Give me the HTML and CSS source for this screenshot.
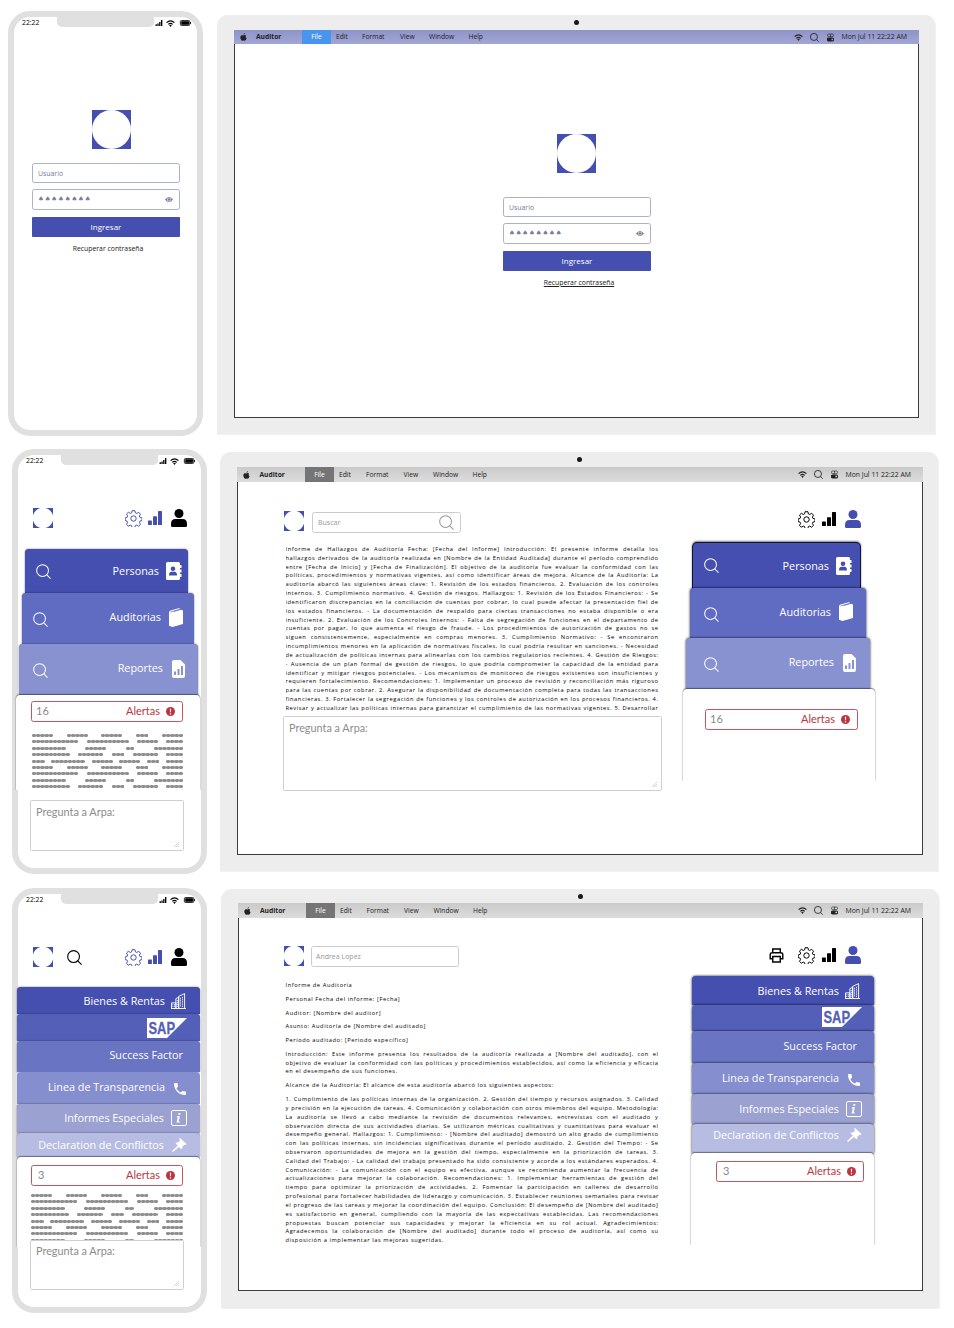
FILE: index.html
```html
<!DOCTYPE html>
<html lang="es">
<head>
<meta charset="utf-8">
<title>Auditor</title>
<link rel="stylesheet" href="styles.css">
</head>
<body>
<svg class="defs" width="0" height="0" aria-hidden="true">
  <symbol id="signal" viewBox="0 0 8 7"><path d="M0 5h1.500v2H0zM2.100 4h1.500v3H2.100zM4.200 2.200h1.500V7H4.200zM6.300 0h1.600v7H6.300z"/></symbol>
  <symbol id="wifi" viewBox="0 0 20 16"><path d="M1 6q9-8 18 0M5 10q5-4.500 10 0" fill="none" stroke="currentColor" stroke-width="2.800"/><path d="M7 12q3-2 6 0l-3 4z"/></symbol>
  <symbol id="battery" viewBox="0 0 13 7"><rect x=".5" y=".5" width="11" height="6" rx="1.500" fill="none" stroke="currentColor"/><rect x="1.500" y="1.400" width="9" height="4.200"/><path d="M12 2.300h1v2.400h-1z"/></symbol>
  <symbol id="logo" viewBox="0 0 40 40"><path fill="#444fb0" d="M0 0h40v40H0z"/><circle cx="20" cy="20" r="20" fill="#fff"/></symbol>
  <symbol id="logo-small" viewBox="0 0 40 40"><path fill="#444fb0" d="M0 0h40v40H0z"/><circle cx="20" cy="20" r="20.600" fill="#fff"/></symbol>
  <symbol id="eye" viewBox="0 0 16 10"><path fill-rule="evenodd" d="M0 5Q8-5 16 5Q8 15 0 5zM8 1.300a3.700 3.700 0 1 0 0 7.400a3.700 3.700 0 1 0 0-7.400z"/><circle cx="8" cy="5" r="2.500"/></symbol>
  <symbol id="search" viewBox="0 0 16 16"><g fill="none" stroke="currentColor"><circle cx="7" cy="7" r="6.300"/><path d="M11.500 11.500l4 4"/></g></symbol>
  <symbol id="apple" viewBox="0 0 14 17"><path d="M10 0q.2 3-3 4Q6.800 1 10 0zM7 5.200q3-2 5.800.5-2.800 2.500.7 5.200Q11.500 17 9.500 16.600q-2-.9-4 0Q2.800 17 .8 12-.8 6.500 3 4.800q2-.7 4 .4z"/></symbol>
  <symbol id="control" viewBox="0 0 16 18"><g fill="none" stroke="currentColor" stroke-width="1.500"><rect x="1" y="1" width="14" height="6" rx="3"/><path d="M8 1v6"/></g><path fill-rule="evenodd" d="M4 9h8a4 4 0 0 1 0 9H4a4 4 0 0 1 0-9zm8 2.500a2 2 0 1 0 0 4a2 2 0 1 0 0-4z"/></symbol>
  <symbol id="gear" viewBox="0 0 24 24"><g fill="none" stroke="currentColor" stroke-width="1.400" stroke-linejoin="round"><path d="M10 1h4l.7 3.100 1.800.8 2.800-1.700 2.600 2.700-1.600 2.700.8 1.900 3 .7v3.700l-3 .8-.8 1.800 1.600 2.800-2.700 2.600-2.700-1.600-1.900.8-.7 2.900h-3.800l-.8-2.900-1.800-.8-2.800 1.600-2.600-2.700 1.600-2.700-.8-1.800-2.700-.8v-3.700l2.700-.7.8-1.900-1.600-2.800 2.600-2.600 2.800 1.700 1.800-.8z"/><circle cx="12" cy="12" r="3.800"/></g></symbol>
  <symbol id="bars" viewBox="0 0 14 14"><rect y="9.500" width="3.900" height="4.500" rx=".6"/><rect x="5" y="5.300" width="4" height="8.700" rx=".6"/><rect x="10" width="4" height="14" rx=".6"/></symbol>
  <symbol id="person" viewBox="0 0 16 18"><circle cx="8" cy="4.500" r="4.500"/><path d="M4.500 10h7q4.500 0 4.500 5v1.500q0 1.500-1.500 1.500h-13Q0 18 0 16.500V15q0-5 4.500-5z"/></symbol>
  <symbol id="contact" viewBox="0 0 16 18"><path fill-rule="evenodd" d="M1.500 0h11Q14 0 14 1.500V3h1.500v3H14v1.500h1.500v3H14V12h1.500v3H14v1.500q0 1.500-1.500 1.500h-11Q0 18 0 16.500v-15Q0 0 1.500 0zM7 4.500a2.300 2.300 0 1 0 0 4.600a2.300 2.300 0 1 0 0-4.600zM3 13.500h8q0-3.700-2.500-3.700h-3Q3 9.800 3 13.500z"/></symbol>
  <symbol id="book" viewBox="0 0 14 19"><path d="M0 4.500Q0 3 1.500 2.500L10.500 0v1.300L4.300 3.300l1 .5L12 1.800l2 .7v13.500L3.500 19 0 17.800z"/><path d="M1.500 4L10 1.600" stroke="#5f6cc2" stroke-width=".7"/></symbol>
  <symbol id="report" viewBox="0 0 13 18"><path fill-rule="evenodd" d="M2 0h6.500L13 4.500V16q0 2-2 2H2q-2 0-2-2V2q0-2 2-2zM2 11.500V15h2v-3.500zM5.500 9v6h2V9zM9 6v9h2V6z"/></symbol>
  <symbol id="buildings" viewBox="0 0 16 17"><g fill="none" stroke="currentColor" stroke-width="1"><path d="M.5 16.500v-6h4.700v6M5.200 16.500V6l3-1.500v12M8.200 16.500V3.500L14.500.6v15.900M0 16.500h16"/><path d="M2 12v3M3.700 12v3M6.700 7.500v8M10.200 5v10M12.300 4v11" stroke-dasharray="1.200 .8"/></g></symbol>
  <symbol id="sap" viewBox="0 0 40 20"><path fill="#fff" d="M0 0h40L20 20H0z"/><text x="1.500" y="16" font-family="Liberation Sans" font-weight="700" font-size="17" textLength="26.500" lengthAdjust="spacingAndGlyphs" fill="currentColor" stroke="currentColor" stroke-width=".3">SAP</text></symbol>
  <symbol id="phone" viewBox="0 0 18 18"><path d="M3.600 7.800c1.400 2.800 3.800 5.100 6.600 6.600l2.200-2.200q.5-.5 1-.2c1.100.4 2.300.6 3.600.6q1 0 1 1V17q0 1-1 1C7.600 18 0 10.400 0 1q0-1 1-1h3.500q1 0 1 1c0 1.300.2 2.500.6 3.600q.1.500-.2 1z"/></symbol>
  <symbol id="info" viewBox="0 0 16 16"><rect x=".5" y=".5" width="15" height="15" rx="1.500" fill="none" stroke="currentColor"/><path d="M7.500 3h2l-.4 1.700H7.100zM6 6.300h3l-1.400 5.200H9l-.3 1H5.500l1.300-5H5.700z"/></symbol>
  <symbol id="gavel" viewBox="0 0 16 15"><path d="M8.500 0l7 6.300-1.300 1.300-.9-.3-2.400 2.200.2 1.400-1.200 1.100-2.500-2.400L1 15 0 14l6.200-6-2.400-2.200L5 4.500l1.500.2L8.600 2.700 8.200 1.500 7.300 1.100z"/></symbol>
  <symbol id="alert" viewBox="0 0 10 10"><circle cx="5" cy="5" r="5"/><path d="M4.300 1.900h1.400l-.2 3.900h-1z" fill="#fff"/><circle cx="5" cy="7.400" r=".8" fill="#fff"/></symbol>
  <symbol id="printer" viewBox="0 0 15 16"><g fill="none" stroke="currentColor" stroke-width="1.500"><path d="M3.500 5V1h8v4M3 11.500H.8V7q0-2 2-2h9.400q2 0 2 2v4.500H12"/><path d="M3.500 9h8v6h-8z"/></g></symbol>
  <symbol id="grip" viewBox="0 0 6 6"><path d="M0 6l6-6M2.500 6L6 2.500M4.500 6L6 4.500" fill="none" stroke="#aaa" stroke-width=".6"/></symbol>
</svg>

<main class="board">

<section class="row row-login">
  <div class="mobile">
    <div class="notch"></div>
    <div class="status"><span>22:22</span><svg class="i-signal"><use href="#signal"/></svg><svg class="i-wifi"><use href="#wifi"/></svg><svg class="i-battery"><use href="#battery"/></svg></div>
    <div class="login login-mobile">
      <svg class="login-logo"><use href="#logo"/></svg>
      <div class="input user">Usuario</div>
      <div class="input pass"><span class="mask">♠♠♠♠♠♠♠♠</span><svg class="i-eye"><use href="#eye"/></svg></div>
      <div class="button">Ingresar</div>
      <div class="link">Recuperar contraseña</div>
    </div>
  </div>
  <div class="laptop">
    <div class="camera"></div>
    <div class="screen">
      <div class="menubar blue"><svg class="i-apple"><use href="#apple"/></svg><b>Auditor</b><span class="active">File</span><span class="edit">Edit</span><span>Format</span><span>View</span><span>Window</span><span>Help</span><div class="tray"><svg class="i-mwifi"><use href="#wifi"/></svg><svg class="i-msearch"><use href="#search"/></svg><svg class="i-control"><use href="#control"/></svg><span>Mon Jul 11 22:22 AM</span></div></div>
      <div class="login login-desk">
        <svg class="login-logo"><use href="#logo"/></svg>
        <div class="input user">Usuario</div>
        <div class="input pass"><span class="mask">♠♠♠♠♠♠♠♠</span><svg class="i-eye"><use href="#eye"/></svg></div>
        <div class="button">Ingresar</div>
        <div class="link underlined">Recuperar contraseña</div>
      </div>
    </div>
  </div>
</section>

<section class="row row-home">
  <div class="mobile">
    <div class="notch"></div>
    <div class="status"><span>22:22</span><svg class="i-signal"><use href="#signal"/></svg><svg class="i-wifi"><use href="#wifi"/></svg><svg class="i-battery"><use href="#battery"/></svg></div>
    <div class="m-head"><svg class="i-logo"><use href="#logo-small"/></svg><svg class="i-gear brand push"><use href="#gear"/></svg><svg class="i-bars brand"><use href="#bars"/></svg><svg class="i-person"><use href="#person"/></svg></div>
    <div class="stack m-home">
      <div class="card c1"><svg class="i-search"><use href="#search"/></svg><span>Personas</span><svg class="i-contact"><use href="#contact"/></svg></div>
      <div class="card c2"><svg class="i-search"><use href="#search"/></svg><span>Auditorias</span><svg class="i-book"><use href="#book"/></svg></div>
      <div class="card c3"><svg class="i-search"><use href="#search"/></svg><span>Reportes</span><svg class="i-report"><use href="#report"/></svg></div>
      <div class="panel">
        <div class="alert"><span>16</span><strong>Alertas</strong><svg class="i-alert"><use href="#alert"/></svg></div>
        <div class="redacted">
          <p><i class="w5"></i><i class="w5"></i><i class="w5"></i><i class="w3"></i><i class="w5"></i></p>
          <p><i class="w11"></i><i class="w10"></i><i class="w5"></i><i class="w4"></i></p>
          <p><i class="w8"></i><i class="w5"></i><i class="w2"></i><i class="w7"></i></p>
          <p><i class="w9"></i><i class="w6"></i><i class="w3"></i><i class="w6"></i><i class="w4"></i></p>
          <p><i class="w3"></i><i class="w8"></i><i class="w5"></i><i class="w5"></i><i class="w3"></i><i class="w4"></i></p>
          <p><i class="w5"></i><i class="w5"></i><i class="w5"></i><i class="w3"></i><i class="w5"></i></p>
          <p><i class="w11"></i><i class="w10"></i><i class="w5"></i><i class="w4"></i></p>
          <p><i class="w8"></i><i class="w5"></i><i class="w2"></i><i class="w7"></i></p>
          <p><i class="w9"></i><i class="w6"></i><i class="w3"></i><i class="w6"></i><i class="w4"></i></p>
        </div>
      </div>
    </div>
    <div class="ask"><span>Pregunta a Arpa:</span><svg class="i-grip"><use href="#grip"/></svg></div>
  </div>
  <div class="laptop">
    <div class="camera"></div>
    <div class="screen">
      <div class="menubar"><svg class="i-apple"><use href="#apple"/></svg><b>Auditor</b><span class="active">File</span><span class="edit">Edit</span><span>Format</span><span>View</span><span>Window</span><span>Help</span><div class="tray"><svg class="i-mwifi"><use href="#wifi"/></svg><svg class="i-msearch"><use href="#search"/></svg><svg class="i-control"><use href="#control"/></svg><span>Mon Jul 11 22:22 AM</span></div></div>
      <div class="desk desk-home">
        <div class="left">
          <div class="d-head"><svg class="i-logo"><use href="#logo-small"/></svg><div class="find"><span>Buscar</span><svg class="i-search"><use href="#search"/></svg></div></div>
          <div class="doc doc-clip">
            <p class="full"><span>Informe de Hallazgos de Auditoría Fecha: [Fecha del Informe] Introducción: El presente informe detalla los</span>
            <span>hallazgos derivados de la auditoría realizada en [Nombre de la Entidad Auditada] durante el período comprendido</span>
            <span>entre [Fecha de Inicio] y [Fecha de Finalización]. El objetivo de la auditoría fue evaluar la conformidad con las</span>
            <span>políticas, procedimientos y normativas vigentes, así como identificar áreas de mejora. Alcance de la Auditoría: La</span>
            <span>auditoría abarcó las siguientes áreas clave: 1. Revisión de los estados financieros. 2. Evaluación de los controles</span>
            <span>internos. 3. Cumplimiento normativo. 4. Gestión de riesgos. Hallazgos: 1. Revisión de los Estados Financieros: - Se</span>
            <span>identificaron discrepancias en la conciliación de cuentas por cobrar, lo cual puede afectar la presentación fiel de</span>
            <span>los estados financieros. - La documentación de respaldo para ciertas transacciones no estaba disponible o era</span>
            <span>insuficiente. 2. Evaluación de los Controles Internos: - Falta de segregación de funciones en el departamento de</span>
            <span>cuentas por pagar, lo que aumenta el riesgo de fraude. - Los procedimientos de autorización de gastos no se</span>
            <span>siguen consistentemente, especialmente en compras menores. 3. Cumplimiento Normativo: - Se encontraron</span>
            <span>incumplimientos menores en la aplicación de normativas fiscales, lo cual podría resultar en sanciones. - Necesidad</span>
            <span>de actualización de políticas internas para alinearlas con los cambios regulatorios recientes. 4. Gestión de Riesgos:</span>
            <span>- Ausencia de un plan formal de gestión de riesgos, lo que podría comprometer la capacidad de la entidad para</span>
            <span>identificar y mitigar riesgos potenciales. - Los mecanismos de monitoreo de riesgos existentes son insuficientes y</span>
            <span>requieren fortalecimiento. Recomendaciones: 1. Implementar un proceso de revisión y reconciliación más riguroso</span>
            <span>para las cuentas por cobrar. 2. Asegurar la disponibilidad de documentación completa para todas las transacciones</span>
            <span>financieras. 3. Fortalecer la segregación de funciones y los controles de autorización en los procesos financieros. 4.</span>
            <span>Revisar y actualizar las políticas internas para garantizar el cumplimiento de las normativas vigentes. 5. Desarrollar</span></p>
          </div>
          <div class="ask"><span>Pregunta a Arpa:</span><svg class="i-grip"><use href="#grip"/></svg></div>
        </div>
        <div class="right">
          <div class="tools"><svg class="i-gear"><use href="#gear"/></svg><svg class="i-bars"><use href="#bars"/></svg><svg class="i-person brand"><use href="#person"/></svg></div>
          <div class="stack d-home">
            <div class="card c1"><svg class="i-search"><use href="#search"/></svg><span>Personas</span><svg class="i-contact"><use href="#contact"/></svg></div>
            <div class="card c2"><svg class="i-search"><use href="#search"/></svg><span>Auditorias</span><svg class="i-book"><use href="#book"/></svg></div>
            <div class="card c3"><svg class="i-search"><use href="#search"/></svg><span>Reportes</span><svg class="i-report"><use href="#report"/></svg></div>
            <div class="panel"><div class="alert"><span>16</span><strong>Alertas</strong><svg class="i-alert"><use href="#alert"/></svg></div></div>
          </div>
        </div>
      </div>
    </div>
  </div>
</section>

<section class="row row-detail">
  <div class="mobile">
    <div class="notch"></div>
    <div class="status"><span>22:22</span><svg class="i-signal"><use href="#signal"/></svg><svg class="i-wifi"><use href="#wifi"/></svg><svg class="i-battery"><use href="#battery"/></svg></div>
    <div class="m-head"><svg class="i-logo"><use href="#logo-small"/></svg><svg class="i-search"><use href="#search"/></svg><svg class="i-gear brand push"><use href="#gear"/></svg><svg class="i-bars brand"><use href="#bars"/></svg><svg class="i-person"><use href="#person"/></svg></div>
    <div class="stack m-detail">
      <div class="card k1"><span>Bienes &amp; Rentas</span><svg class="i-buildings"><use href="#buildings"/></svg></div>
      <div class="card k2"><svg class="i-sap"><use href="#sap"/></svg></div>
      <div class="card k3"><span>Success Factor</span></div>
      <div class="card k4"><span>Linea de Transparencia</span><svg class="i-phone"><use href="#phone"/></svg></div>
      <div class="card k5"><span>Informes Especiales</span><svg class="i-info"><use href="#info"/></svg></div>
      <div class="card k6"><span>Declaration de Conflictos</span><svg class="i-gavel"><use href="#gavel"/></svg></div>
      <div class="panel">
        <div class="alert"><span>3</span><strong>Alertas</strong><svg class="i-alert"><use href="#alert"/></svg></div>
        <div class="redacted">
          <p><i class="w5"></i><i class="w5"></i><i class="w5"></i><i class="w3"></i><i class="w5"></i></p>
          <p><i class="w11"></i><i class="w10"></i><i class="w5"></i><i class="w4"></i></p>
          <p><i class="w8"></i><i class="w5"></i><i class="w2"></i><i class="w7"></i></p>
          <p><i class="w9"></i><i class="w6"></i><i class="w3"></i><i class="w6"></i><i class="w4"></i></p>
          <p><i class="w3"></i><i class="w8"></i><i class="w5"></i><i class="w5"></i><i class="w3"></i><i class="w4"></i></p>
          <p><i class="w5"></i><i class="w5"></i><i class="w5"></i><i class="w3"></i><i class="w5"></i></p>
          <p><i class="w11"></i><i class="w10"></i><i class="w5"></i><i class="w4"></i></p>
          <p><i class="w8"></i><i class="w5"></i><i class="w2"></i><i class="w7"></i></p>
        </div>
      </div>
    </div>
    <div class="ask"><span>Pregunta a Arpa:</span><svg class="i-grip"><use href="#grip"/></svg></div>
  </div>
  <div class="laptop">
    <div class="camera"></div>
    <div class="screen">
      <div class="menubar"><svg class="i-apple"><use href="#apple"/></svg><b>Auditor</b><span class="active">File</span><span class="edit">Edit</span><span>Format</span><span>View</span><span>Window</span><span>Help</span><div class="tray"><svg class="i-mwifi"><use href="#wifi"/></svg><svg class="i-msearch"><use href="#search"/></svg><svg class="i-control"><use href="#control"/></svg><span>Mon Jul 11 22:22 AM</span></div></div>
      <div class="desk desk-detail">
        <div class="left">
          <div class="d-head"><svg class="i-logo"><use href="#logo-small"/></svg><div class="find"><span>Andrea Lopez</span></div></div>
          <div class="doc">
            <p>Informe de Auditoria</p>
            <p>Personal Fecha del informe: [Fecha]</p>
            <p>Auditor: [Nombre del auditor]</p>
            <p>Asunto: Auditoría de [Nombre del auditado]</p>
            <p>Periodo auditado: [Periodo específico]</p>
            <p class="full"><span>Introducción: Este informe presenta los resultados de la auditoría realizada a [Nombre del auditado], con el</span>
            <span>objetivo de evaluar la conformidad con las políticas y procedimientos establecidos, así como la eficiencia y eficacia</span>
            <span class="last">en el desempeño de sus funciones.</span></p>
            <p>Alcance de la Auditoría: El alcance de esta auditoría abarcó los siguientes aspectos:</p>
            <p class="full"><span>1. Cumplimiento de las políticas internas de la organización. 2. Gestión del tiempo y recursos asignados. 3. Calidad</span>
            <span>y precisión en la ejecución de tareas. 4. Comunicación y colaboración con otros miembros del equipo. Metodología:</span>
            <span>La auditoría se llevó a cabo mediante la revisión de documentos relevantes, entrevistas con el auditado y</span>
            <span>observación directa de sus actividades diarias. Se utilizaron métricas cualitativas y cuantitativas para evaluar el</span>
            <span>desempeño general. Hallazgos: 1. Cumplimiento: - [Nombre del auditado] demostró un alto grado de cumplimiento</span>
            <span>con las políticas internas, sin incidencias significativas durante el período auditado. 2. Gestión del Tiempo: - Se</span>
            <span>observaron oportunidades de mejora en la gestión del tiempo, especialmente en la priorización de tareas. 3.</span>
            <span>Calidad del Trabajo: - La calidad del trabajo presentado ha sido consistente y acorde a los estándares esperados. 4.</span>
            <span>Comunicación: - La comunicación con el equipo es efectiva, aunque se recomienda aumentar la frecuencia de</span>
            <span>actualizaciones para mejorar la colaboración. Recomendaciones: 1. Implementar herramientas de gestión del</span>
            <span>tiempo para optimizar la priorización de actividades. 2. Fomentar la participación en talleres de desarrollo</span>
            <span>profesional para fortalecer habilidades de liderazgo y comunicación. 3. Establecer reuniones semanales para revisar</span>
            <span>el progreso de las tareas y mejorar la coordinación del equipo. Conclusión: El desempeño de [Nombre del auditado]</span>
            <span>es satisfactorio en general, cumpliendo con la mayoría de las expectativas establecidas. Las recomendaciones</span>
            <span>propuestas buscan potenciar sus capacidades y mejorar la eficiencia en su rol actual. Agradecimientos:</span>
            <span>Agradecemos la colaboración de [Nombre del auditado] durante todo el proceso de auditoría, así como su</span>
            <span class="last">disposición a implementar las mejoras sugeridas.</span></p>
          </div>
        </div>
        <div class="right">
          <div class="tools"><svg class="i-printer"><use href="#printer"/></svg><svg class="i-gear"><use href="#gear"/></svg><svg class="i-bars"><use href="#bars"/></svg><svg class="i-person brand"><use href="#person"/></svg></div>
          <div class="stack d-detail">
            <div class="card k1"><span>Bienes &amp; Rentas</span><svg class="i-buildings"><use href="#buildings"/></svg></div>
            <div class="card k2"><svg class="i-sap"><use href="#sap"/></svg></div>
            <div class="card k3"><span>Success Factor</span></div>
            <div class="card k4"><span>Linea de Transparencia</span><svg class="i-phone"><use href="#phone"/></svg></div>
            <div class="card k5"><span>Informes Especiales</span><svg class="i-info"><use href="#info"/></svg></div>
            <div class="card k6"><span>Declaration de Conflictos</span><svg class="i-gavel"><use href="#gavel"/></svg></div>
            <div class="panel"><div class="alert"><span>3</span><strong>Alertas</strong><svg class="i-alert"><use href="#alert"/></svg></div></div>
          </div>
        </div>
      </div>
    </div>
  </div>
</section>

</main>
</body>
</html>
```
FILE: styles.css
```css
* { box-sizing: border-box; }
body { margin: 0; background: #fff; color: #000; font-family: "Open Sans", "Noto Sans", sans-serif; }
p { margin: 0; }
svg { display: block; flex: none; fill: currentColor; overflow: visible; }
.defs { position: absolute; }
.board { width: 954px; height: 1328px; padding-top: 11px; overflow: hidden; }
.row { display: flex; align-items: flex-start; padding-left: 12px; }
.row-login { padding-left: 8px; gap: 14px; }
.row-home { margin-top: 13px; gap: 13px; }
.row-detail { margin-top: 14px; gap: 14px; }
.brand { color: #444fb0; }

/* Phone frame */
.mobile { position: relative; width: 195px; height: 425px; border: 6px solid #e0e0e0; border-radius: 22px; background: #fff; flex: none; }
.notch { position: absolute; left: 43px; top: -1px; width: 97px; height: 11px; background: #e0e0e0; border-radius: 0 0 5px 5px; }
.status { height: 12px; display: flex; align-items: center; padding: 0 5px 0 8px; font-size: 6.800px; line-height: 12px; }
.status span { margin-right: auto; }
.i-signal { width: 8px; height: 6px; margin-right: 3px; }
.i-wifi { width: 9px; height: 7px; margin-right: 4px; }
.i-battery { width: 13px; height: 6px; }

/* Laptop frame */
.laptop { position: relative; width: 719px; height: 420px; margin-top: 4px; padding: 15px 17px 0; background: #ecedec; border: 1px solid #f0f1f1; border-width: 0 1px 1px 0; border-radius: 11px 11px 0 0; flex: none; }
.row-home .laptop { margin-top: 3px; }
.row-detail .laptop { margin-top: 1px; padding-top: 14px; }
.camera { position: absolute; left: 357px; top: 5px; width: 5px; height: 5px; border-radius: 50%; background: #17171c; }
.screen { width: 685px; height: 388px; border: 1px solid #3c3c3c; border-top: 0; background: #fff; }
.row-home .screen { width: 686px; }
.menubar { height: 14px; margin: 0 -1px; padding-left: 6px; display: grid; grid-template-columns: 16px 46px 29px 31px 38px 29px 39.500px 40px 1fr; align-items: center; font-size: 6.700px; line-height: 14px; background: linear-gradient(#cacaca, #dcdcdc); color: #222; }
.row-home .menubar, .row-detail .menubar { height: 15px; line-height: 15px; }
.row-home .menubar { grid-template-columns: 16.500px 45.500px 29px 32px 37.500px 29.500px 39.500px 40px 1fr; }
.row-detail .menubar { grid-template-columns: 16px 46px 29px 31.500px 37.500px 29.500px 39.500px 40px 1fr; }
.menubar.blue { background: linear-gradient(#8e94c6, #a2a6d6); }
.menubar b { font-size: 6.700px; }
.menubar .active { background: #757575; color: #fff; text-align: center; }
.menubar.blue .active { background: #4895ee; }
.menubar .edit { padding-left: 5px; }
.i-apple { width: 7px; height: 8px; }
.tray { display: flex; align-items: center; justify-content: flex-end; padding-right: 12px; white-space: nowrap; font-size: 6.900px; }
.i-mwifi { width: 9px; height: 7px; margin-right: 7px; }
.i-msearch { width: 9px; height: 9px; margin-right: 8px; stroke-width: 1.500; }
.i-control { width: 7px; height: 9px; margin-right: 7px; }

/* Login */
.login { display: flex; flex-direction: column; align-items: center; width: 148px; }
.login-mobile { margin: 81px 0 0 18px; }
.login-desk { margin: 90px 0 0 268px; }
.login-logo { width: 39px; height: 39px; margin-right: 1px; }
.login-mobile .login-logo { margin: 0 0 0 11px; }
.input { width: 148px; height: 21px; border: 1px solid #a9b0d0; border-radius: 2.500px; font-size: 6.900px; line-height: 19px; color: #767b96; padding: 0 6px 0 5px; display: flex; align-items: center; }
.user { margin-top: 14px; height: 20px; }
.login-desk .user { margin-top: 24px; }
.pass { margin-top: 6px; }
.mask { font-family: "DejaVu Sans", sans-serif; font-size: 6.500px; letter-spacing: .850px; margin-right: auto; }
.i-eye { width: 8px; height: 5px; }
.button { width: 148px; height: 20px; margin-top: 7px; background: #444fb0; color: #fff; font-size: 8px; line-height: 20px; text-align: center; border-radius: 1px; }
.link { font-size: 6.850px; line-height: 10px; margin: 7px 0 0 4px; white-space: nowrap; color: #222; }
.underlined { text-decoration: underline; }

/* Header icons */
.m-head { display: flex; align-items: center; height: 20px; margin-top: 41px; padding: 0 14px 0 15px; }
.i-logo { width: 20px; height: 20px; }
.push { margin-left: auto; }
.i-gear { width: 17px; height: 17px; margin-right: 6px; }
.i-bars { width: 14px; height: 14px; margin-right: 9px; }
.i-person { width: 16px; height: 18px; }
.m-head .i-search { width: 15px; height: 15px; margin-left: 14px; stroke-width: 1.200; }
.i-search { width: 15px; height: 15px; stroke-width: 1.100; }
.i-printer { width: 15px; height: 15px; margin-right: 14px; }
.tools { display: flex; align-items: center; justify-content: flex-end; height: 18px; padding-right: 14px; }
.tools .i-gear { margin-right: 7px; }

/* Stacked cards */
.stack { display: flex; flex-direction: column; align-items: flex-start; }
.card { position: relative; display: flex; align-items: center; justify-content: flex-end; border-radius: 4px 4px 0 0; box-shadow: 0 0 1.500px rgba(0,0,0,.75); color: #fff; font-size: 10.800px; line-height: 14px; white-space: nowrap; flex: none; }
.card .i-search { margin-right: auto; }
.c2 .i-search, .c3 .i-search { margin-top: 5px; }
.c1 { background: #444fb0; }
.c2 { background: #5f6cc2; }
.c3 { background: #8892d0; }
.i-contact { width: 16px; height: 18px; margin-left: 7px; }
.i-book { width: 14px; height: 19px; margin-left: 8px; }
.i-report { width: 13px; height: 18px; margin: 2px 0 0 9px; }
.panel { position: relative; background: #fff; border-radius: 4px 4px 0 0; flex: none; box-shadow: 0 -1px 1px rgba(0,0,0,.35), 0 0 1.500px rgba(0,0,0,.6); clip-path: inset(-3px -3px 0 -3px); }
.m-home { margin-top: 21px; }
.m-home .c1 { width: 163px; height: 44px; margin-left: 7px; padding: 0 6px 0 11px; }
.m-home .c2 { width: 172px; height: 51px; margin-left: 4px; padding: 0 11px 3px 11px; }
.m-home .c3 { width: 179px; height: 51px; margin-left: 1px; padding: 0 13px 3px 14px; }
.m-home .panel { width: 184px; height: 95px; margin-left: -2px; padding: 6px 17px 0 15px; }
.d-home { margin-top: 15px; }
.d-home .c1 { width: 167px; height: 45px; margin-left: 10px; padding: 0 8px 0 11px; }
.d-home .c2 { width: 176px; height: 50px; margin-left: 7px; padding: 0 13px 3px 14px; }
.d-home .c3 { width: 184px; height: 51px; margin-left: 3px; padding: 0 14px 3px 18px; }
.d-home .panel { width: 192px; height: 92px; padding: 20px 17px 0 22px; }
.d-home .card, .d-detail .card { box-shadow: 0 0 2.500px rgba(0,0,0,.95); }
.d-home .card.c1 { box-shadow: 0 0 0 1px #10142e, 0 -1px 2px 1px rgba(0,0,0,.5); }

.k1 { background: #444fb0; }
.k2 { background: #5460b8; }
.k3 { background: #6974c3; }
.k4 { background: #858ecf; }
.k5 { background: #9ba1d0; }
.k6 { background: #b7bde2; }
.m-detail .card { width: 183px; margin-left: -1px; padding-right: 13px; }
.m-detail { margin-top: 20px; }
.m-detail .k1 { height: 27px; padding-right: 14px; }
.m-detail .k2 { height: 27px; color: #5460b8; }
.m-detail .k3 { height: 31px; padding: 0 17px 4px 0; }
.m-detail .k4 { height: 32px; padding-right: 14px; padding-bottom: 2px; box-shadow: none; }
.m-detail .k5 { height: 29px; padding-bottom: 1px; }
.m-detail .k6 { height: 24px; }
.m-detail .panel { width: 183px; height: 90px; margin-left: -1px; padding: 8px 17px 0 14px; }
.d-detail .card { width: 182px; margin-left: 1px; padding-right: 12px; }
.d-detail { margin-top: 12px; }
.d-detail .k1 { height: 29px; padding-right: 14px; }
.d-detail .k2 { height: 26px; padding-bottom: 2px; color: #5460b8; }
.d-detail .k3 { height: 32px; padding: 0 17px 3px 0; }
.d-detail .k4 { height: 31px; padding-right: 14px; padding-bottom: 2px; }
.d-detail .k5 { height: 30px; }
.d-detail .k6 { height: 29px; padding-bottom: 7px; }
.d-detail .panel { width: 183px; height: 92px; padding: 8px 10px 0 25px; }
.i-buildings { width: 15px; height: 16px; margin-left: 6px; }
.i-sap { width: 40px; height: 20px; }
.i-phone { width: 12px; height: 12px; margin: 4px 0 0 9px; }
.i-info { width: 16px; height: 16px; margin-left: 7px; }
.i-gavel { width: 15px; height: 14px; margin-left: 8px; }

.alert { height: 21px; border: 1px solid #c9545e; border-radius: 2.500px; display: flex; align-items: center; padding: 0 7px 1px 4px; font-family: Lato, sans-serif; font-size: 11px; line-height: 14px; color: #888; }
.m-detail .alert, .d-detail .alert { padding-left: 6px; }
.alert strong { margin-left: auto; font-weight: 400; color: #be3540; }
.i-alert { width: 9px; height: 9px; margin-left: 6px; color: #be3540; }
.redacted { margin: 11px 0 0 1px; height: 58px; }
.redacted p { display: flex; justify-content: space-between; height: 6.400px; }
.redacted i { height: 3px; margin-top: 1px; background: radial-gradient(ellipse 2.100px 1.700px at center, #8f8f8f 85%, #c6c6c6 100%) 0 0 / 4.200px 3px; }
.m-detail .redacted { margin: 7px 0 0; height: 49px; }
.w2 { width: 8.400px; }
.w3 { width: 12.600px; }
.w4 { width: 16.800px; }
.w5 { width: 21px; }
.w6 { width: 25.200px; }
.w7 { width: 29.400px; }
.w8 { width: 33.600px; }
.w9 { width: 37.800px; }
.w10 { width: 42px; }
.w11 { width: 46.200px; }

.ask { position: relative; background: #fff; border: 1px solid #cfcfcf; border-radius: 1.500px; display: flex; justify-content: space-between; padding: 3px 4px 3px 5px; color: #8c8c8c; font-family: Lato, sans-serif; font-size: 10.850px; line-height: 15px; }
.mobile .ask { width: 154px; height: 51px; margin: 10px 0 0 12px; }
.row-detail .mobile .ask { height: 50px; margin-top: -7px; padding-top: 2px; }
.i-grip { width: 5px; height: 5px; align-self: flex-end; }

/* Desktop body */
.desk { display: flex; }
.desk-home { padding: 29px 0 0 45px; }
.desk-detail { padding: 28px 0 0 44px; }
.left { width: 379px; flex: none; }
.right { flex: none; }
.desk-home .right { width: 192px; margin: -1px 0 0 21px; }
.desk-detail .right { width: 183px; margin-left: 29px; }
.desk-detail .tools { padding-right: 13px; }
.d-head { display: flex; padding-left: 1px; }
.find { width: 149px; height: 21px; margin: 1px 0 0 8px; border: 1px solid #ccc; border-radius: 2.500px; display: flex; align-items: center; justify-content: space-between; padding: 0 6px 0 5px; color: #999; font-size: 7px; }
.desk-detail .find { width: 148px; margin: 0 0 0 7px; padding-left: 4px; }
.doc { width: 373px; margin: 14px 0 0 2.500px; font-size: 5.700px; line-height: 8.830px; letter-spacing: .58px; }
.doc p { margin-bottom: 4.950px; white-space: nowrap; }
.doc .full span { display: block; text-align: justify; text-align-last: justify; white-space: nowrap; height: 8.830px; }
.doc .full .last { text-align-last: left; }
.doc-clip { height: 166px; margin-top: 12px; overflow: hidden; }
.left .ask { height: 75px; margin-top: 5px; }
```
